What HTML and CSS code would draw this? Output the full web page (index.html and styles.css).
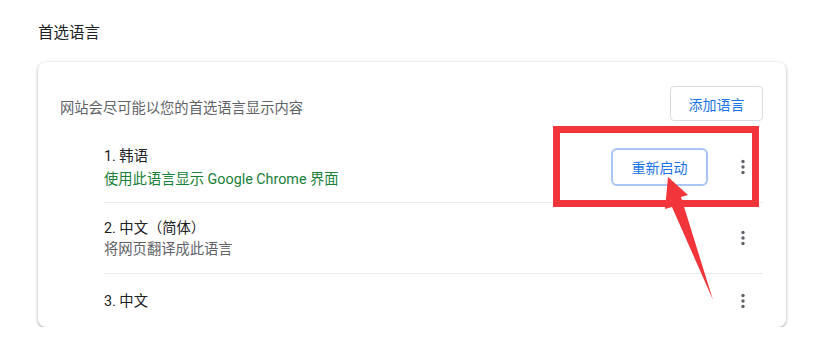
FILE: index.html
```html
<!DOCTYPE html>
<html lang="zh-CN">
<head>
    <meta charset="UTF-8">
    <meta name="viewport" content="width=device-width, initial-scale=1.0">
    <title>语言</title>
    <link rel="stylesheet" href="styles.css">
</head>
<body>
    <div class="page">
        <h2 class="section-title">首选语言</h2>

        <div class="card">
            <div class="card-header">
                <div class="card-desc">网站会尽可能以您的首选语言显示内容</div>
                <button class="btn-outline">添加语言</button>
            </div>

            <div class="lang-list">
                <div class="lang-row">
                    <div class="lang-text">
                        <div class="lang-name">1. 韩语</div>
                        <div class="lang-sub ui-lang">使用此语言显示 Google Chrome 界面</div>
                    </div>
                    <div class="lang-actions">
                        <button class="btn-restart">重新启动</button>
                        <button class="icon-btn" aria-label="更多操作">
                            <svg viewBox="0 0 4 16"><circle cx="2" cy="2.5" r="1.7"></circle><circle cx="2" cy="8" r="1.7"></circle><circle cx="2" cy="13.5" r="1.7"></circle></svg>
                        </button>
                    </div>
                </div>

                <div class="lang-row">
                    <div class="lang-text">
                        <div class="lang-name">2. 中文（简体）</div>
                        <div class="lang-sub">将网页翻译成此语言</div>
                    </div>
                    <div class="lang-actions">
                        <button class="icon-btn" aria-label="更多操作">
                            <svg viewBox="0 0 4 16"><circle cx="2" cy="2.5" r="1.7"></circle><circle cx="2" cy="8" r="1.7"></circle><circle cx="2" cy="13.5" r="1.7"></circle></svg>
                        </button>
                    </div>
                </div>

                <div class="lang-row last">
                    <div class="lang-text">
                        <div class="lang-name">3. 中文</div>
                    </div>
                    <div class="lang-actions">
                        <button class="icon-btn" aria-label="更多操作">
                            <svg viewBox="0 0 4 16"><circle cx="2" cy="2.5" r="1.7"></circle><circle cx="2" cy="8" r="1.7"></circle><circle cx="2" cy="13.5" r="1.7"></circle></svg>
                        </button>
                    </div>
                </div>
            </div>
        </div>
    </div>

    <!-- 标注：红框和箭头 -->
    <svg class="annotation" viewBox="0 0 819 355">
        <rect x="556.5" y="129.5" width="199" height="74" fill="none" stroke="#f2353a" stroke-width="7"></rect>
        <polygon points="668,177 688,195 681,197 713,300 672,207 665,209" fill="#f2353a"></polygon>
    </svg>
</body>
</html>
```

FILE: styles.css
```css
body {
    margin: 0;
    background-color: #ffffff;
    font-family: Roboto, "Noto Sans CJK SC", sans-serif;
    color: #202124;
}

.page {
    padding: 23px 33px 0 38px;
}

.section-title {
    margin: 0 0 19px;
    font-size: 15.5px;
    font-weight: 400;
    line-height: 20px;
    color: #202124;
}

.card {
    width: 748px;
    height: 265px;
    border-radius: 8px;
    background-color: #fff;
    box-shadow: 0 1px 2px rgba(60,64,67,0.3), 0 1px 3px 1px rgba(60,64,67,0.15);
}

.card-header {
    display: flex;
    justify-content: space-between;
    align-items: flex-end;
    padding: 24px 23px 0 22px;
}

.card-desc {
    font-size: 14.3px;
    line-height: 20px;
    padding-bottom: 3px;
    color: #5f6368;
}

button {
    font-family: inherit;
    cursor: pointer;
}

.btn-outline {
    width: 93px;
    height: 35px;
    padding: 0;
    border: 1px solid #dadce0;
    border-radius: 4px;
    background-color: #fff;
    color: #1a73e8;
    font-size: 14px;
}

.lang-list {
    margin: 11px 23px 0 66px;
}

.lang-row {
    display: flex;
    justify-content: space-between;
    align-items: center;
    box-sizing: border-box;
    height: 71px;
    border-bottom: 1px solid #e8eaed;
}

.lang-row.last {
    height: 53px;
    border-bottom: none;
}

.lang-name {
    font-size: 14.3px;
    line-height: 20px;
    color: #202124;
}

.lang-sub {
    margin-top: 1px;
    font-size: 14.3px;
    line-height: 20px;
    color: #5f6368;
}

.lang-sub.ui-lang {
    margin-top: 3px;
    color: #188038;
}

.lang-actions {
    display: flex;
    align-items: center;
}

.btn-restart {
    width: 97px;
    height: 38px;
    margin-right: 15px;
    padding: 0;
    border: 2px solid #a8c5f5;
    border-radius: 6px;
    background-color: #fff;
    color: #1a73e8;
    font-size: 14px;
}

.icon-btn {
    display: flex;
    align-items: center;
    justify-content: center;
    width: 40px;
    height: 40px;
    padding: 0;
    border: none;
    background: none;
}

.icon-btn svg {
    width: 4px;
    height: 16px;
    fill: #5f6368;
}

.annotation {
    position: absolute;
    top: 0;
    left: 0;
    width: 819px;
    height: 355px;
    pointer-events: none;
}
```
